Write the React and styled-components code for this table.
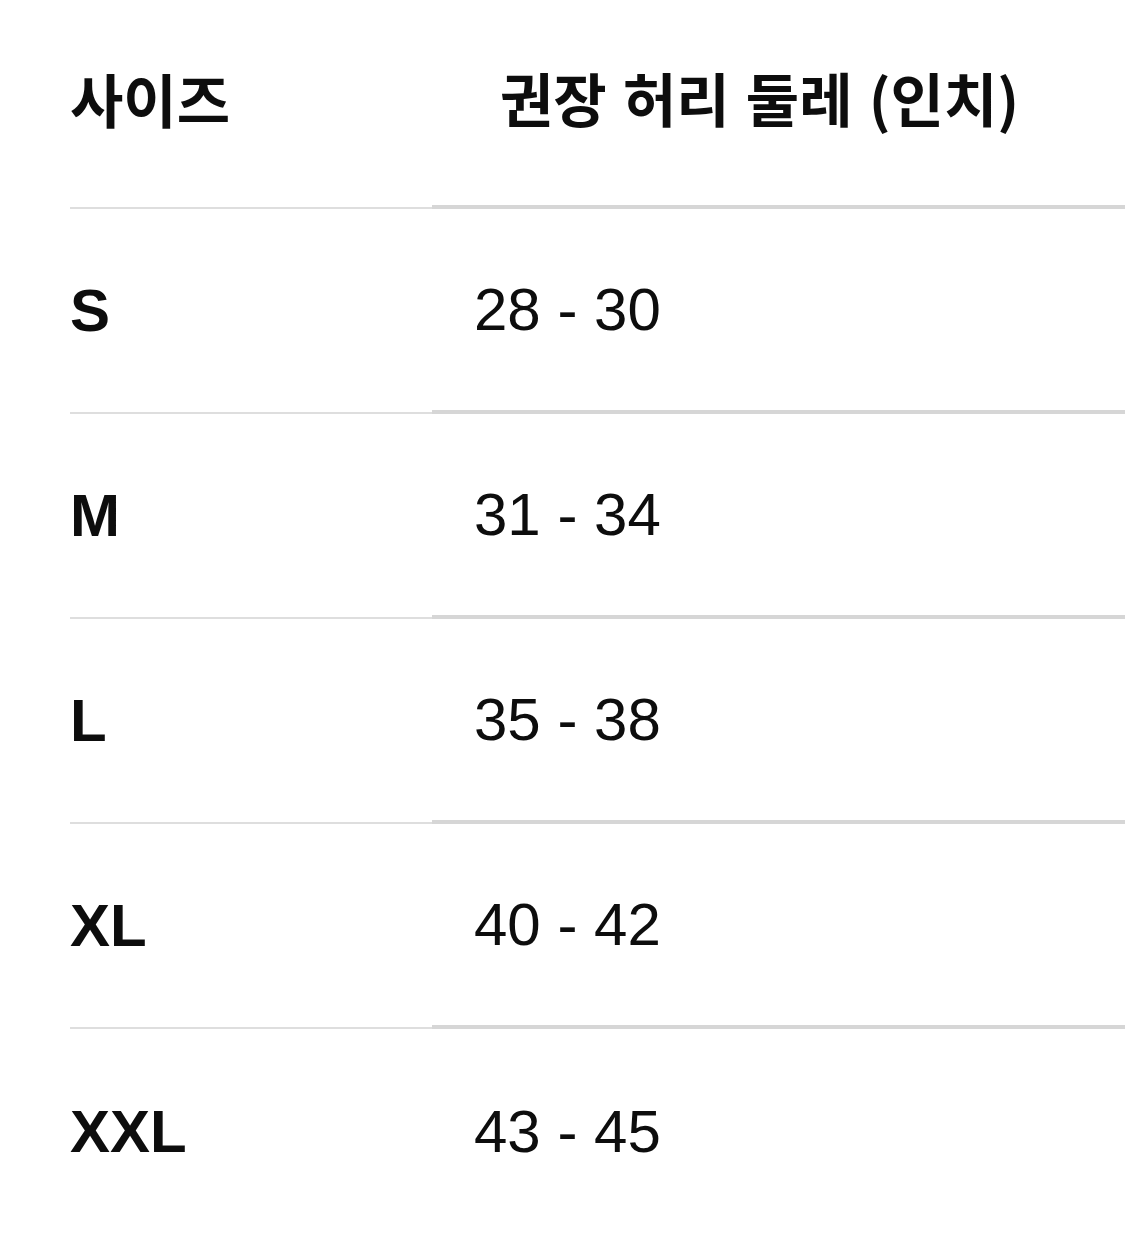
import React from "react";
import styled, { createGlobalStyle } from "styled-components";

const Global = createGlobalStyle`
  html, body {
    margin: 0;
    padding: 0;
    background: #ffffff;
  }
  body {
    font-family: "Liberation Sans", Arial, "Noto Sans CJK KR", sans-serif;
    color: #0d0d0d;
  }
`;

const Table = styled.div`
  display: grid;
  grid-template-columns: 362px 1fr;
  padding-left: 70px;
  width: 1125px;
  box-sizing: border-box;
`;

const HeadCell = styled.div`
  height: 209px;
  display: flex;
  align-items: center;
  padding-left: ${p => p.$indent || 0}px;
  padding-bottom: 12px;
  box-sizing: border-box;
  font-family: "Noto Sans CJK KR", sans-serif;
  font-weight: 700;
  font-size: 58px;
  word-spacing: 3px;
  white-space: nowrap;
  color: #0d0d0d;
  border-bottom: ${p => (p.$wide ? "4px solid #d6d6d6" : "2px solid #dedede")};
`;

const Cell = styled.div`
  height: 205px;
  display: flex;
  align-items: center;
  padding-left: ${p => p.$indent || 0}px;
  box-sizing: border-box;
  font-size: 60px;
  font-weight: ${p => (p.$bold ? 700 : 400)};
  color: #0d0d0d;
  border-bottom: ${p =>
    p.$last ? "none" : p.$wide ? "4px solid #d6d6d6" : "2px solid #dedede"};
`;

const rows = [
  ["S", "28 - 30"],
  ["M", "31 - 34"],
  ["L", "35 - 38"],
  ["XL", "40 - 42"],
  ["XXL", "43 - 45"],
];

export default function App() {
  return (
    <>
      <Global />
      <Table>
        <HeadCell>사이즈</HeadCell>
        <HeadCell $wide $indent={68}>권장 허리 둘레 (인치)</HeadCell>
        {rows.map(([size, range], i) => (
          <React.Fragment key={size}>
            <Cell $bold $last={i === rows.length - 1}>{size}</Cell>
            <Cell $wide $indent={42} $last={i === rows.length - 1}>{range}</Cell>
          </React.Fragment>
        ))}
      </Table>
    </>
  );
}
